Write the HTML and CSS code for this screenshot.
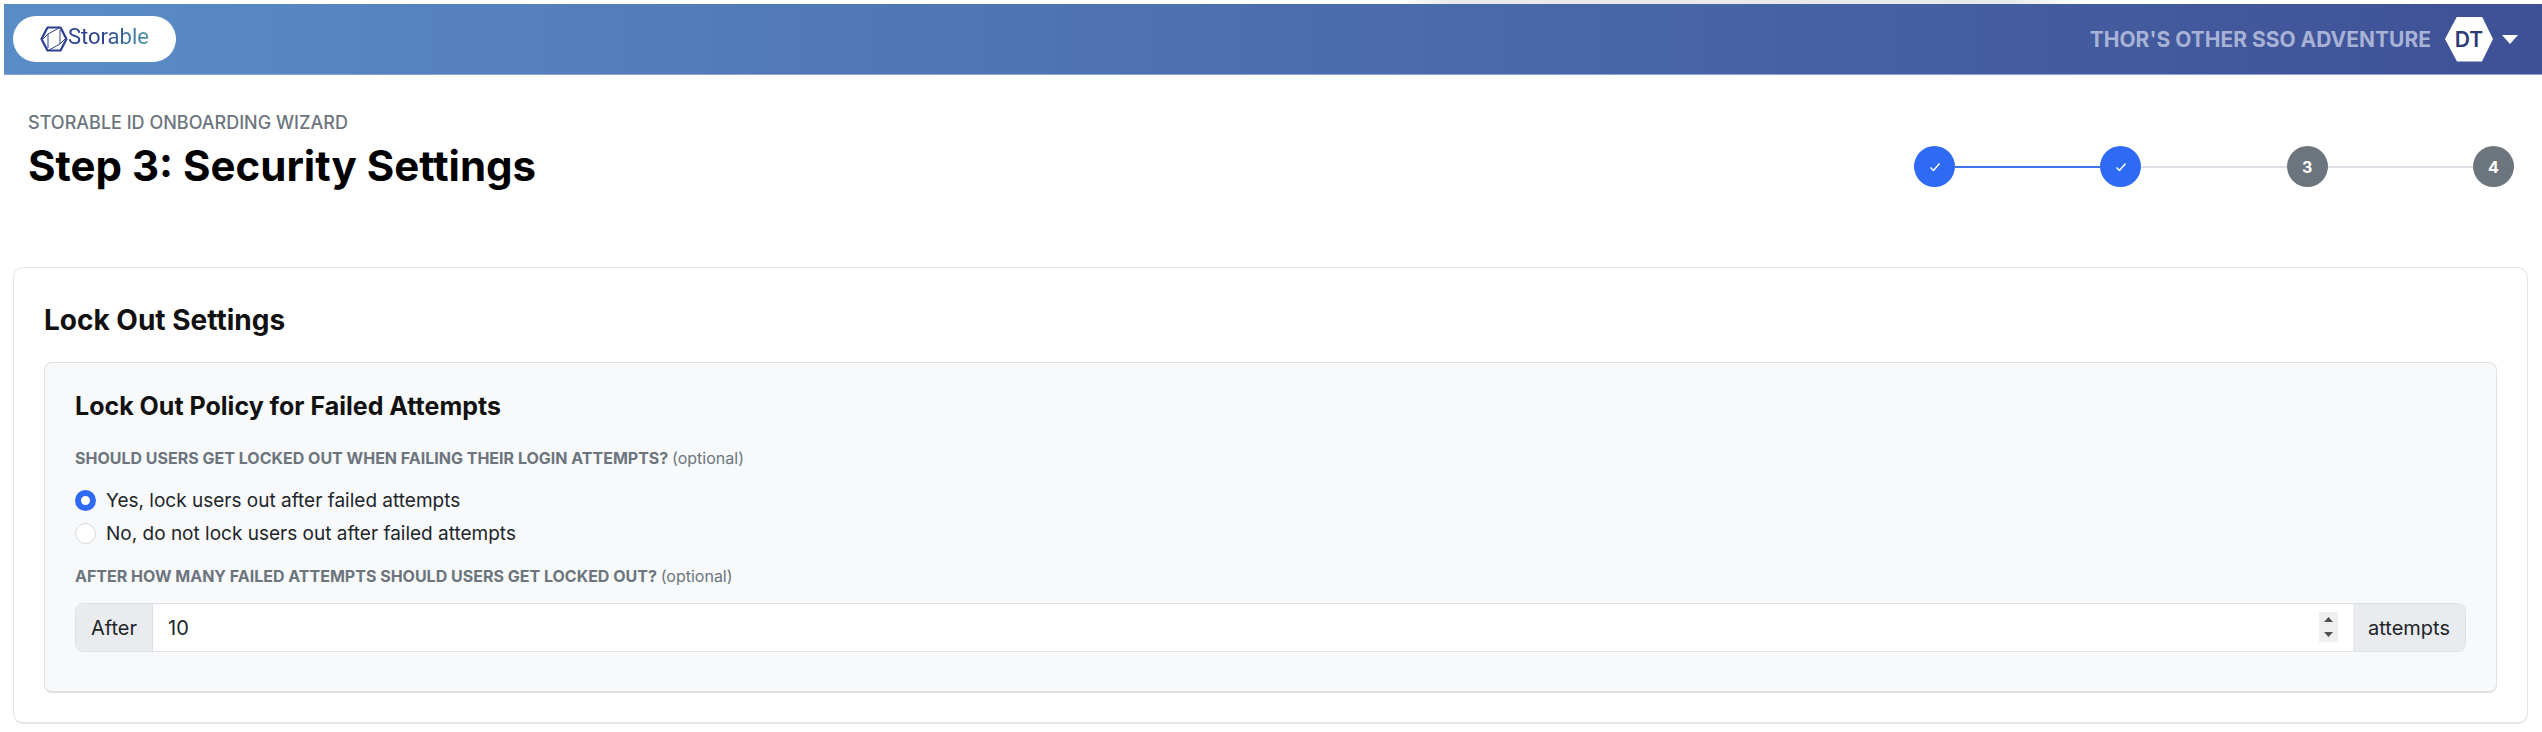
FILE: index.html
```
<!DOCTYPE html>
<html lang="en">
<head>
<meta charset="UTF-8" />
<meta name="viewport" content="width=device-width, initial-scale=1" />
<title>Step 3: Security Settings</title>
<link rel="stylesheet" href="styles.css">
</head>
<body>

<header class="topbar">
  <a class="brand" href="#">
    <svg class="brand-icon" viewBox="0 0 28 26" width="28" height="26" fill="none" stroke="#2a3f8f">
      <path d="M7.500 1.500h13L26.500 13l-6 11.500h-13L1.500 13z" stroke-width="2.200" stroke-linejoin="round" />
      <path d="M8 8v14M8 8l11-6M20 4v14M20 18L9 24M3 13l5-5M25 13l-5 5" stroke-width="1" />
    </svg>
    <span class="brand-name">Storable</span>
  </a>
  <button class="account" type="button">
    <span class="account-name">THOR'S OTHER SSO ADVENTURE</span>
    <span class="avatar">DT</span>
    <span class="caret"></span>
  </button>
</header>

<main>
  <div class="page-head">
    <div>
      <p class="kicker">STORABLE ID ONBOARDING WIZARD</p>
      <h1>Step 3: Security Settings</h1>
    </div>
    <ol class="steps">
      <li class="step done">
        <svg viewBox="0 0 12 12" width="12" height="12"><path d="M1.500 6.500l3 3 6-7" fill="none" stroke="#fff" stroke-width="1.500" /></svg>
      </li>
      <li class="line done"></li>
      <li class="step done">
        <svg viewBox="0 0 12 12" width="12" height="12"><path d="M1.500 6.500l3 3 6-7" fill="none" stroke="#fff" stroke-width="1.500" /></svg>
      </li>
      <li class="line"></li>
      <li class="step">3</li>
      <li class="line"></li>
      <li class="step">4</li>
    </ol>
  </div>

  <section class="card">
    <h2>Lock Out Settings</h2>
    <form class="panel">
      <h3>Lock Out Policy for Failed Attempts</h3>

      <fieldset>
        <legend class="field-label">SHOULD USERS GET LOCKED OUT WHEN FAILING THEIR LOGIN ATTEMPTS? <small>(optional)</small></legend>
        <label class="radio"><input type="radio" name="lockout" value="yes" checked /> Yes, lock users out after failed attempts</label>
        <label class="radio"><input type="radio" name="lockout" value="no" /> No, do not lock users out after failed attempts</label>
      </fieldset>

      <label class="field-label" for="attempts">AFTER HOW MANY FAILED ATTEMPTS SHOULD USERS GET LOCKED OUT? <small>(optional)</small></label>
      <div class="input-group">
        <span class="addon">After</span>
        <input type="number" id="attempts" value="10" min="1" />
        <span class="addon">attempts</span>
      </div>
    </form>
  </section>
</main>

</body>
</html>
```
FILE: styles.css
```
* {
  box-sizing: border-box;
}
body {
  margin: 0;
  padding: 4px 0 0 4px;
  background: linear-gradient(90deg, transparent 55%, #e9e9e9 57%, #e9e9e9 79%, transparent 82%) top / 100% 4px no-repeat #fff;
  font-family: Inter, "Liberation Sans", sans-serif;
  font-size: 20px;
  line-height: 32px;
  color: #212529;
}
h1, h2, h3, p {
  margin: 0;
}

/* top bar */
.topbar {
  display: flex;
  justify-content: space-between;
  align-items: center;
  height: 71px;
  padding: 0 24px 0 9px;
  background: linear-gradient(90deg, #5a8dc8, #4b6bab 55%, #3f5196);
  border-bottom: 1px solid #8ea3d0;
}
.brand {
  display: flex;
  align-items: center;
  height: 46px;
  padding: 0 27px;
  background: #fff;
  border-radius: 23px;
  text-decoration: none;
}
.brand-name {
  font-family: Roboto, sans-serif;
  font-size: 22px;
  line-height: 24px;
  padding-bottom: 5px;
  background: linear-gradient(90deg, #2a3f8f 40%, #4a93a8);
  -webkit-background-clip: text;
  background-clip: text;
  color: transparent;
}
.account {
  display: flex;
  align-items: center;
  padding: 0;
  border: none;
  background: none;
  font-family: inherit;
  cursor: pointer;
}
.account-name {
  font-size: 21px;
  font-weight: 700;
  color: #a8b2d6;
}
.avatar {
  display: flex;
  align-items: center;
  justify-content: center;
  width: 48px;
  height: 45px;
  margin: 0 9px 0 14px;
  background: #fff;
  clip-path: polygon(25% 0, 77% 0, 100% 50%, 77% 100%, 25% 100%, 0 50%);
  font-size: 21px;
  font-weight: 600;
  color: #2b3a78;
}
.caret {
  border: 8px solid transparent;
  border-top: 9px solid #fff;
  border-bottom: none;
}

/* page title + progress */
.page-head {
  display: flex;
  justify-content: space-between;
  align-items: center;
  padding: 36px 28px 70px 24px;
}
.kicker {
  font-size: 18px;
  line-height: 24px;
  font-weight: 500;
  color: #6c757d;
}
h1 {
  font-size: 42px;
  line-height: 62px;
  color: #000;
}
.steps {
  display: flex;
  align-items: center;
  width: 600px;
  margin: 25px 0 0;
  padding: 0;
  list-style: none;
}
.step {
  display: flex;
  align-items: center;
  justify-content: center;
  width: 41px;
  height: 41px;
  border-radius: 50%;
  background: #6c757d;
  font-size: 16px;
  font-weight: 700;
  color: #fff;
}
.line {
  flex: 1;
  height: 2px;
  background: #dee2e6;
}
.step.done {
  background: #2f6af5;
}
.line.done {
  background: #3f76ee;
}

/* settings card */
.card {
  margin: 0 14px 8px 9px;
  padding: 32px 30px 29px;
  border: 1px solid #e4e5e7;
  border-bottom-width: 2px;
  border-radius: 10px;
}
h2 {
  margin-bottom: 22px;
  font-size: 28px;
  line-height: 40px;
  color: #111;
}
.panel {
  padding: 27px 30px 39px;
  background: #f8f9fb;
  border: 1px solid #dfe1e4;
  border-bottom-width: 2px;
  border-radius: 8px;
}
h3 {
  margin-bottom: 20px;
  font-size: 25px;
  line-height: 32px;
  color: #111;
}
fieldset {
  margin: 0 0 10px;
  padding: 0;
  border: none;
}
.field-label {
  display: block;
  padding: 0;
  font-size: 16px;
  line-height: 32px;
  font-weight: 700;
  color: #6c757d;
}
.field-label small {
  font-size: 16px;
  font-weight: 400;
}
legend {
  margin-bottom: 10px;
}
.radio {
  display: flex;
  align-items: center;
  gap: 10px;
  height: 33px;
  font-size: 19px;
}
.radio input {
  appearance: none;
  width: 21px;
  height: 21px;
  margin: 0;
  border: 1px solid #d5d9dd;
  border-radius: 50%;
  background: #fff;
}
.radio input:checked {
  border: 6px solid #2f6af5;
}
.input-group {
  display: flex;
  height: 49px;
  margin-top: 11px;
  border: 1px solid #dee0e5;
  border-radius: 8px;
  overflow: hidden;
}
.addon {
  display: flex;
  align-items: center;
  padding: 0 15px;
  background: #e9ebef;
}
.input-group input {
  flex: 1;
  min-width: 0;
  padding: 0 15px;
  border: none;
  border-left: 1px solid #dee0e5;
  background: #fff;
  font: inherit;
  color: inherit;
}
.input-group input::-webkit-inner-spin-button {
  appearance: none;
  opacity: 1;
  width: 19px;
  height: 30px;
  background: #efefef url("data:image/svg+xml,%3Csvg xmlns='http://www.w3.org/2000/svg' width='19' height='30' viewBox='0 0 19 30'%3E%3Cpath d='M5 10l4.500-5 4.500 5zM5 20l4.500 5 4.500-5z' fill='%23505050'/%3E%3C/svg%3E") center no-repeat;
}
```
